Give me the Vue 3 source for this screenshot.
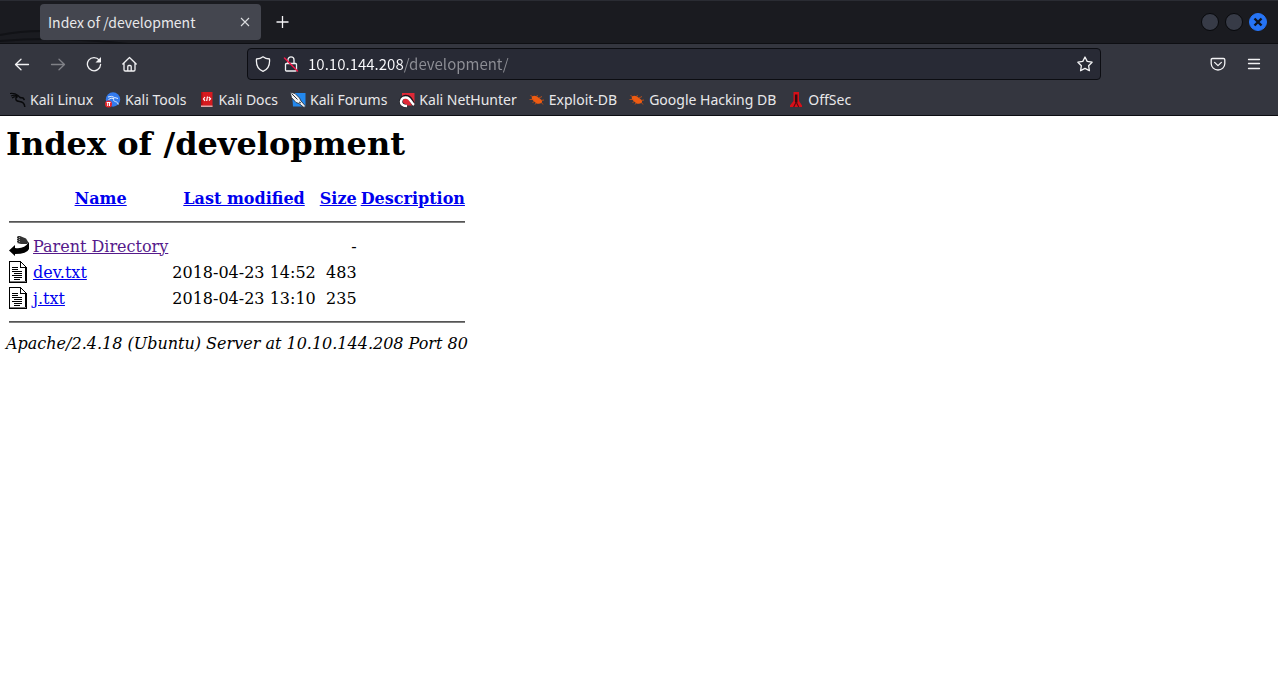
<script setup>
import { ref } from 'vue'

const address = ref('10.10.144.208/development/')
const bookmarks = [
  { id: 'kali', label: 'Kali Linux' },
  { id: 'tools', label: 'Kali Tools' },
  { id: 'docs', label: 'Kali Docs' },
  { id: 'forums', label: 'Kali Forums' },
  { id: 'hunter', label: 'Kali NetHunter' },
  { id: 'bug', label: 'Exploit-DB' },
  { id: 'bug', label: 'Google Hacking DB' },
  { id: 'offsec', label: 'OffSec' }
]
const columns = ['Name', 'Last modified', 'Size', 'Description']
const entries = [
  { name: 'Parent Directory', date: '', size: '-', parent: true },
  { name: 'dev.txt', date: '2018-04-23 14:52', size: '483' },
  { name: 'j.txt', date: '2018-04-23 13:10', size: '235' }
]
</script>

<template>
  <div class="browser">
    <header class="chrome">
      <div class="tabbar">
        <svg class="swirl" width="150" height="42" viewBox="0 0 150 42" fill="none" aria-hidden="true">
          <path d="M0 34Q20 30 42 30M0 40Q70 34 150 46" stroke="#111216" stroke-width="2" />
        </svg>
        <div class="tab">
          <span class="tab-title">Index of /development</span>
          <button class="tab-close" aria-label="Close tab">
            <svg width="10" height="10" viewBox="0 0 10 10"><path d="M1 1l8 8M9 1l-8 8" stroke="#dcdde0" stroke-width="1.1" /></svg>
          </button>
        </div>
        <button class="new-tab" aria-label="New tab">
          <svg width="14" height="14" viewBox="0 0 14 14"><path d="M6.500 1v12M.5 7h12" stroke="#f4f4f6" stroke-width="1.3" /></svg>
        </button>
        <div class="window-controls">
          <button class="dot" aria-label="Minimize"></button>
          <button class="dot" aria-label="Maximize"></button>
          <button class="dot close" aria-label="Close window">
            <svg width="10" height="10" viewBox="0 0 10 10"><path d="M1.500 1.500l7 7M8.500 1.500l-7 7" stroke="#10131a" stroke-width="2.400" /></svg>
          </button>
        </div>
      </div>

      <nav class="toolbar" aria-label="Navigation">
        <div class="nav-buttons">
          <button aria-label="Back">
            <svg width="16" height="16" viewBox="0 0 16 16"><path d="M14.500 8.500H1.800M7 3.300L1.500 8.500 7 13.700" /></svg>
          </button>
          <button class="dim" aria-label="Forward">
            <svg width="16" height="16" viewBox="0 0 16 16"><path d="M1.500 8.500h12.700M9 3.300l5.500 5.200L9 13.700" /></svg>
          </button>
          <button aria-label="Reload">
            <svg width="16" height="16" viewBox="0 0 16 16"><path d="M13.300 4.200A6.600 6.600 0 1 0 14.600 8.500" /><path d="M15 1v5.500H9.500z" class="solid" /></svg>
          </button>
          <button aria-label="Home">
            <svg width="16" height="16" viewBox="0 0 16 16"><path d="M.8 8L7.500 1.500 14.200 8M2 7v6.700q0 1.300 1.300 1.300h8.400q1.300 0 1.300-1.300V7M5.800 15v-4.500q0-1 1-1h1.400q1 0 1 1V15" /></svg>
          </button>
        </div>
        <div class="urlbar">
          <button aria-label="Tracking protection">
            <svg width="16" height="16" viewBox="0 0 16 16"><path d="M8 .8Q5.500 2.900 1.500 3C1 8.500 3 13.400 8 15.300 13 13.400 15 8.500 14.500 3Q10.500 2.900 8 .8z" /></svg>
          </button>
          <button aria-label="Connection is not secure">
            <svg width="16" height="16" viewBox="0 0 16 16"><path d="M5 7V3.800a3 3 0 0 1 6 0V7M3.500 7.500h9q1 0 1 1v5.500q0 1-1 1h-9q-1 0-1-1V8.500q0-1 1-1z" /><path d="M1.500 2l13 13" class="slash" /></svg>
          </button>
          <input v-model="address" class="address" type="text" aria-label="Address" />
          <button aria-label="Bookmark this page">
            <svg width="16" height="16" viewBox="0 0 16 16"><path d="M8 1l2.200 4.400 4.900.8-3.500 3.500.8 5L8 12.400l-4.400 2.300.8-5L.9 6.200l4.900-.8z" /></svg>
          </button>
        </div>
        <div class="right-buttons">
          <button aria-label="Save to Pocket">
            <svg width="16" height="16" viewBox="0 0 16 16"><path d="M2.500 2.500h11q1.300 0 1.300 1.300V7.500a6.800 6.500 0 0 1-13.600 0V3.800q0-1.300 1.300-1.300z" /><path d="M4.600 6.400L8 9.600l3.400-3.200" /></svg>
          </button>
          <button aria-label="Open menu">
            <svg width="16" height="16" viewBox="0 0 16 16"><path d="M2.500 3.500h11M2.500 7.500h11M2.500 12.500h11" /></svg>
          </button>
        </div>
      </nav>

      <nav class="bookmarks" aria-label="Bookmarks">
        <a v-for="mark in bookmarks" :key="mark.label" href="#">
          <svg width="16" height="16" viewBox="0 0 16 16" aria-hidden="true">
            <g v-if="mark.id === 'kali'" fill="none" stroke="#08090b">
              <path d="M0 1.500Q5 1 8 3.500L10.500 6M1 4Q4 2.500 7.500 4M2 6Q5 4 8 5" stroke-width="1.200" />
              <path d="M7 4.500C4.500 7 6 9.300 9.500 9.500 13 9.700 14.500 11.500 14.800 15M10 5.500l3 .5 1.500 2" stroke-width="1.500" />
            </g>
            <g v-else-if="mark.id === 'tools'">
              <circle cx="8" cy="7.500" r="7.200" fill="#347bed" />
              <path d="M3 5Q7 3.500 9.500 5.500M3.500 7.500Q6 5.500 9 6.500C7.500 9 10 9.500 11.500 10Q13 10.700 13.300 12.500M9.500 5.500l3.500 1" stroke="#e4efff" fill="none" />
              <circle cx="3.500" cy="12" r="3.500" fill="#e5252c" />
              <path d="M1.700 10.500h3.800M2.700 10.500v3.500M4.500 10.500v3.500" stroke="#fff" fill="none" />
            </g>
            <g v-else-if="mark.id === 'docs'">
              <path d="M2 0h11.500v15H2z" fill="#d61a1f" />
              <path d="M2 0h1.500v13H2z" fill="#a80f14" />
              <path d="M2 13.500h11.500V15H2z" fill="#d8a9ab" />
              <path d="M6 5L4.500 7 6 8.800M8.500 4.500L7.700 9M9.700 5l1.800 1.800L10 8.500" stroke="#fff" stroke-width="1.200" fill="none" />
            </g>
            <g v-else-if="mark.id === 'forums'">
              <path d="M2 1h13.500v13.500H3z" fill="#2388ed" />
              <path d="M0 0l5 1.500L9.500 6l1.500 3 4.500 5-1.500 1.500-5-4-3-1L1.500 5.500z" fill="#f2f3f4" stroke="#222730" stroke-width=".8" />
              <path d="M1.500 1.500l6 6M9 10l2 1" stroke="#30343b" />
            </g>
            <g v-else-if="mark.id === 'hunter'">
              <path d="M3 1h12.500v12.500H3z" fill="#df2937" />
              <path d="M2 9C2.500 5 6 4 9 5c3.500 1.200 3.500 4.500 6 8.500M2 8.500Q2 14 7.500 14" fill="none" stroke="#16171c" stroke-width="3.500" />
              <path d="M8 14C4 14 1.800 12 2 9.500 2.500 6 5.500 4.800 8.500 5.800c3 1 3.500 4.500 6.500 7.200" fill="none" stroke="#fff" stroke-width="2.500" />
            </g>
            <g v-else-if="mark.id === 'bug'">
              <path d="M3 4.500Q5 3 8 4.500L11.500 7q2.500 2 1 3.800-2 1.700-5 .7L4.500 9Q2 6.500 3 4.500z" fill="#ed5b12" />
              <path d="M1.500 3.500l3 1.500M.5 7.500h4M3.500 11l2-2M7.500 5l1-2M10 6l3-1.500M12 8.500l3-.5M7 11l-1 1.500M12 10l2 2.500" stroke="#d25211" stroke-width=".8" fill="none" />
            </g>
            <g v-else>
              <path d="M5.500 0h5.500v9l3 4.500V15H2v-1.500L5.500 9z" fill="#d80f18" />
              <path d="M8.200 2.500v8" stroke="#370b10" stroke-width="2.500" />
              <path d="M8.200 10l-2.500 5M8.200 10l2.500 5" stroke="#570c12" stroke-width="1.200" />
            </g>
          </svg>
          <span>{{ mark.label }}</span>
        </a>
      </nav>
    </header>

    <main class="page">
      <h1>Index of /development</h1>
      <table>
        <thead>
          <tr>
            <th class="icon"></th>
            <th v-for="column in columns" :key="column"><a href="#">{{ column }}</a></th>
          </tr>
          <tr><td colspan="5"><hr /></td></tr>
        </thead>
        <tbody>
          <tr v-for="entry in entries" :key="entry.name">
            <td class="icon">
              <svg v-if="entry.parent" width="20" height="22" viewBox="0 0 20 22" role="img" aria-label="Parent directory">
                <path d="M8 1h3l6 2.500 2.500 4-1.500 1.500H12L8 8z" fill="#333" />
                <path d="M8.500 1v7M10.500 2v6" stroke="#999" stroke-width="1" stroke-dasharray="1 1" />
                <path d="M0 15.500L6 10v3q9 1.500 14-6v7q-2 5-14 5v2z" fill="#000" />
              </svg>
              <svg v-else width="20" height="22" viewBox="0 0 20 22" shape-rendering="crispEdges" role="img" aria-label="Text file">
                <path d="M.5.500h11l6 6v15H.5z" fill="#fff" stroke="#000" />
                <path d="M11.500.500v6h6M16.500 7v14" fill="none" stroke="#000" />
                <path d="M1 20.500h16" stroke="#777" />
                <path d="M3 6.500h6M3 8.500h6M3 10.500h10M5 12.500h8M3 14.500h10M5 16.500h8M5 18.500h6" stroke="#000" />
              </svg>
            </td>
            <td><a href="#" :class="{ visited: entry.parent }">{{ entry.name }}</a></td>
            <td class="right">{{ entry.date }}</td>
            <td class="right">{{ entry.size }}</td>
            <td></td>
          </tr>
        </tbody>
        <tfoot>
          <tr><td colspan="5"><hr /></td></tr>
        </tfoot>
      </table>
      <address>Apache/2.4.18 (Ubuntu) Server at 10.10.144.208 Port 80</address>
    </main>
  </div>
</template>

<style>
body {
  margin: 0;
  background: #fff;
}
</style>

<style scoped>
.browser {
  min-height: 100vh;
  background: #fff;
}
.chrome {
  font: 14px/20px "Noto Sans CJK SC", "Noto Sans", sans-serif;
  color: #e8e8ea;
  background: #34363f;
  border-bottom: 1px solid #0c0d12;
}
button {
  display: flex;
  align-items: center;
  justify-content: center;
  padding: 0;
  border: 0;
  background: none;
}
.tabbar {
  position: relative;
  display: flex;
  align-items: center;
  height: 44px;
  box-sizing: border-box;
  padding: 0 11px 0 40px;
  border-top: 1px solid #2a2c33;
  border-bottom: 1px solid #0e0f13;
  background: #1a1b20;
}
.swirl {
  position: absolute;
  left: 0;
  top: 0;
  pointer-events: none;
}
.tab {
  position: relative;
  display: flex;
  align-items: center;
  justify-content: space-between;
  width: 221px;
  height: 36px;
  box-sizing: border-box;
  padding: 0 8px;
  border-radius: 4px;
  background: #44464f;
}
.tab-close {
  width: 16px;
  height: 16px;
}
.new-tab {
  width: 28px;
  height: 28px;
  margin-left: 8px;
}
.window-controls {
  display: flex;
  gap: 6px;
  margin-left: auto;
}
.dot {
  width: 18px;
  height: 18px;
  box-sizing: border-box;
  border: 1px solid #08090c;
  border-radius: 50%;
  background: #373b47;
}
.dot.close {
  border-color: #2674f5;
  background: #2674f5;
}
.toolbar {
  display: flex;
  align-items: center;
  height: 40px;
  padding: 0 16px 0 14px;
}
.toolbar svg {
  fill: none;
  stroke: #f2f2f4;
  stroke-width: 1.3;
  stroke-linejoin: round;
  stroke-linecap: round;
}
.toolbar .solid {
  fill: #f2f2f4;
  stroke: none;
}
.toolbar .slash {
  stroke: #f01848;
  stroke-width: 1.5;
}
.toolbar button {
  flex: none;
  width: 16px;
  height: 16px;
}
.nav-buttons,
.right-buttons {
  display: flex;
  gap: 20px;
}
.dim {
  opacity: 0.4;
}
.urlbar {
  display: flex;
  align-items: center;
  gap: 9px;
  flex: 1;
  height: 32px;
  box-sizing: border-box;
  margin: 0 109px;
  padding: 0 7px;
  border: 1px solid #0c0d12;
  border-radius: 4px;
  background: #282a35;
}
.urlbar button:first-child {
  margin-right: 3px;
}
.address {
  flex: 1;
  min-width: 0;
  height: 24px;
  padding: 0;
  border: 0;
  outline: 0;
  font: 15px/24px "Noto Sans CJK SC", "Noto Sans", sans-serif;
  color: #fbfbfe;
  background: linear-gradient(to right, #fbfbfe 96px, #8e8f96 96px);
  background-clip: text;
  -webkit-background-clip: text;
  -webkit-text-fill-color: transparent;
}
.bookmarks {
  display: flex;
  align-items: center;
  gap: 12px;
  height: 31px;
  padding: 0 10px;
  font-family: "Noto Sans", sans-serif;
}
.bookmarks a {
  display: flex;
  align-items: center;
  gap: 4px;
  color: inherit;
  text-decoration: none;
  white-space: nowrap;
}
.page {
  padding: 10px 6px;
  font: 16px/19px "DejaVu Serif", serif;
  color: #000;
}
h1 {
  margin: 0 0 21px;
  font-size: 32px;
  line-height: 37px;
}
table {
  border-collapse: separate;
  border-spacing: 2px;
}
th,
td {
  padding: 1px;
  white-space: nowrap;
}
.icon {
  width: 20px;
  height: 22px;
}
.icon svg {
  display: block;
}
.right {
  text-align: right;
}
.page a {
  color: #0000ee;
}
.page a.visited {
  color: #551a8b;
}
hr {
  margin: 8px 0;
  border: 0;
  border-top: 1px solid #555;
  border-bottom: 1px solid #808080;
}
</style>
